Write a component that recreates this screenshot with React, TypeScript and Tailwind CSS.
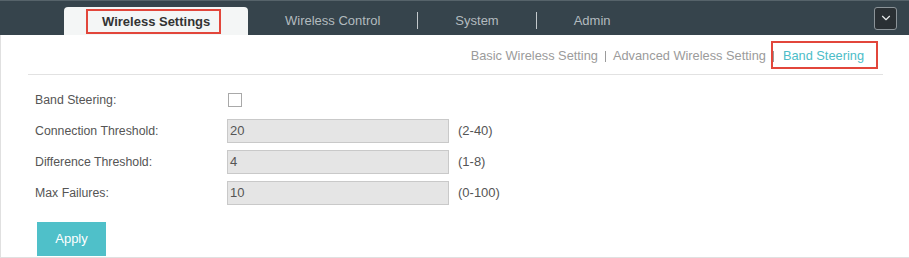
import React from "react";
import { ChevronDown } from "lucide-react";

const topTabs = ["Wireless Control", "System", "Admin"];
const subTabs = ["Basic Wireless Setting", "Advanced Wireless Setting"];

const fields = [
  { label: "Connection Threshold:", value: "20", hint: "(2-40)" },
  { label: "Difference Threshold:", value: "4", hint: "(1-8)" },
  { label: "Max Failures:", value: "10", hint: "(0-100)" },
];

export default function App() {
  return (
    <div className="w-[909px] h-[258px] bg-white flex flex-col font-['Liberation_Sans',Arial,sans-serif]">
      {/* TOP NAV */}
      <div className="h-[35px] shrink-0 bg-[#36444c] border-t border-[#56636a] flex">
        <div className="self-end ml-[64px] h-[28px] w-[184px] bg-[#f4f6f6] rounded-t-[4px] flex items-start pt-[2px] pl-[22px]">
          <span className="h-[25px] pl-[14px] pr-[9px] border-2 border-[#e2463b] flex items-center text-[13px] font-bold text-[#333]">
            Wireless Settings
          </span>
        </div>

        <div className="flex items-center pt-[5px]">
          {topTabs.map((tab, i) => (
            <React.Fragment key={tab}>
              {i > 0 && <div className="w-px h-[17px] bg-[#c3c9cc]" />}
              <span className="px-[37px] text-[13px] text-[#b3bbbf]">{tab}</span>
            </React.Fragment>
          ))}
        </div>

        <button className="self-center ml-auto mr-[12px] w-[23px] h-[23px] rounded-[3px] bg-[#2a3034] border border-[#8c9499] flex items-center justify-center">
          <ChevronDown size={14} strokeWidth={2} className="text-[#e6e9ea]" />
        </button>
      </div>

      {/* CONTENT */}
      <div className="flex-1 border-l border-b border-[#e0e0e0]">
        <div className="ml-[27px] mr-[26px]">
          {/* SUB NAV */}
          <div className="h-[40px] border-b border-[#e2e2e2] flex justify-end items-start pt-[11px] pr-[19px] text-[12.8px]">
            {subTabs.map((tab) => (
              <React.Fragment key={tab}>
                <span className="text-[#9b9b9b]">{tab}</span>
                <span className="self-center -mt-[7px] mx-[7px] w-px h-[11px] bg-[#9b9b9b]" />
              </React.Fragment>
            ))}
            <span className="relative ml-[2px] text-[#4cbdc8]">
              Band Steering
              <span className="absolute -left-[12px] -right-[14px] -top-[5px] -bottom-[4px] border-2 border-[#e2463b]" />
            </span>
          </div>

          {/* FORM */}
          <div className="mt-[13px] pl-[7px] flex flex-col gap-[7px] text-[#555]">
            <div className="h-[24px] flex items-center">
              <span className="w-[192px] text-[12.3px]">Band Steering:</span>
              <span className="ml-[1px] w-[14px] h-[14px] border border-[#a9a9a9] bg-white" />
            </div>
            {fields.map((f) => (
              <div key={f.label} className="h-[24px] flex items-center">
                <span className="w-[192px] text-[12.3px]">{f.label}</span>
                <div className="w-[222px] h-[24px] bg-[#e5e5e5] border border-[#c9c9c9] flex items-center pl-[2px] text-[13px]">
                  {f.value}
                </div>
                <span className="ml-[9px] text-[13px]">{f.hint}</span>
              </div>
            ))}
          </div>

          <button className="mt-[17px] ml-[9px] w-[69px] h-[34px] bg-[#4fc0c9] text-white text-[13px]">
            Apply
          </button>
        </div>
      </div>
    </div>
  );
}
